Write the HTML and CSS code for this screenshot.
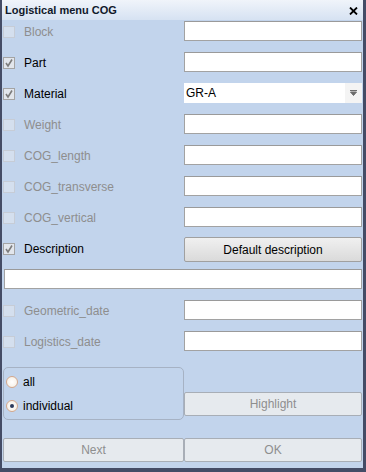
FILE: index.html
```html
<!DOCTYPE html>
<html lang="en">
<head>
    <meta charset="UTF-8">
    <title>Logistical menu COG</title>
    <link rel="stylesheet" href="styles.css">
</head>
<body>
    <div class="window">
        <div class="titlebar">
            <span class="title">Logistical menu COG</span>
            <svg class="close" width="9" height="8" viewBox="0 0 9 8"><path d="M1 0.5 L8 7.5 M8 0.5 L1 7.5" stroke="#000" stroke-width="1.8"/></svg>
        </div>
        <div class="form">
            <div class="check off"><span class="box"></span>Block</div>
            <input type="text" class="field">

            <div class="check on"><span class="box"><svg width="10" height="10" viewBox="0 0 10 10"><path d="M2 5 L4 8 L8 1.5" fill="none" stroke="#7c7c7c" stroke-width="1.6"/></svg></span>Part</div>
            <input type="text" class="field">

            <div class="check on"><span class="box"><svg width="10" height="10" viewBox="0 0 10 10"><path d="M2 5 L4 8 L8 1.5" fill="none" stroke="#7c7c7c" stroke-width="1.6"/></svg></span>Material</div>
            <div class="combo">
                <span>GR-A</span>
                <span class="arrow"><svg width="7" height="6" viewBox="0 0 7 6"><path d="M0 0.5 H7 M0.5 2 H6.5 L3.5 5.5 Z" stroke="#6c6c6c" stroke-width="1" fill="#6c6c6c"/></svg></span>
            </div>

            <div class="check off"><span class="box"></span>Weight</div>
            <input type="text" class="field">

            <div class="check off"><span class="box"></span>COG_length</div>
            <input type="text" class="field">

            <div class="check off"><span class="box"></span>COG_transverse</div>
            <input type="text" class="field">

            <div class="check off"><span class="box"></span>COG_vertical</div>
            <input type="text" class="field">

            <div class="check on"><span class="box"><svg width="10" height="10" viewBox="0 0 10 10"><path d="M2 5 L4 8 L8 1.5" fill="none" stroke="#7c7c7c" stroke-width="1.6"/></svg></span>Description</div>
            <button class="btn default">Default description</button>

            <input type="text" class="field wide">

            <div class="check off"><span class="box"></span>Geometric_date</div>
            <input type="text" class="field">

            <div class="check off"><span class="box"></span>Logistics_date</div>
            <input type="text" class="field">

            <div class="group">
                <div class="radio"><span class="dot"></span>all</div>
                <div class="radio selected"><span class="dot"></span>individual</div>
            </div>
            <button class="btn highlight" disabled>Highlight</button>

            <button class="btn footer" disabled>Next</button>
            <button class="btn footer" disabled>OK</button>
        </div>
    </div>
</body>
</html>
```

FILE: styles.css
```css
body {
    margin: 0;
    font-family: "Liberation Sans", Arial, sans-serif;
    font-size: 12px;
}
.window {
    width: 366px;
    height: 472px;
    box-sizing: border-box;
    background: #c2d4ec;
    border-left: 2px solid #444c66;
    border-right: 3px solid #444c66;
    border-bottom: 4px solid #444c66;
}
.titlebar {
    height: 20px;
    display: flex;
    align-items: center;
    justify-content: space-between;
    padding: 0 5px 0 3px;
    background: linear-gradient(#f0f4fa, #d6e2f2);
}
.title {
    font-weight: 700;
    font-size: 11px;
    color: #10182a;
}
.close {
    margin-top: 1px;
}
/* every row is 20px on a 31px pitch; taller controls overflow their row */
.form {
    display: grid;
    grid-template-columns: 181px 178px;
    grid-auto-rows: 20px;
    row-gap: 11px;
    align-items: start;
    padding: 1px 1px 0 1px;
}
.check {
    display: flex;
    align-items: center;
    gap: 9px;
    height: 20px;
    padding-top: 1px;
    box-sizing: border-box;
}
.check .box {
    width: 10px;
    height: 10px;
    border: 1px solid #a4a4a4;
    background: #e2e6ec;
    display: flex;
    align-items: center;
    justify-content: center;
}
.check.off {
    color: #8e8e8e;
}
.check.off .box {
    border-color: #c6ccd6;
    background: #d4dfee;
}
.check.on {
    color: #000;
}
.field {
    box-sizing: border-box;
    height: 20px;
    margin: 0;
    padding: 0 2px;
    border: 1px solid #a2a2a2;
    border-top-color: #9a9a9a;
    background: #fff;
    font: inherit;
}
.field.wide {
    grid-column: 1 / 3;
    margin-left: 1px;
}
.combo {
    height: 20px;
    display: flex;
    align-items: center;
    justify-content: space-between;
    background: #fff;
    padding-left: 2px;
    color: #000;
}
.arrow {
    width: 17px;
    height: 100%;
    display: flex;
    align-items: center;
    justify-content: center;
    background: #f4f4f4;
}
.btn {
    box-sizing: border-box;
    margin: 0;
    font: inherit;
    border: 1px solid #a8aeb6;
    border-radius: 2px;
    background: #e6eaee;
    color: #8e8e8e;
}
.btn.default {
    height: 25px;
    margin-top: -1px;
    color: #000;
    border-color: #a0a0a0;
    background: linear-gradient(#f0f0f0, #dadada);
}
.group {
    box-sizing: border-box;
    height: 53px;
    margin-top: 5px;
    border: 1px solid #a6b2c4;
    border-radius: 5px;
    padding: 8px 0 0 2px;
    display: flex;
    flex-direction: column;
    gap: 12px;
}
.radio {
    display: flex;
    align-items: center;
    gap: 5px;
    color: #000;
    height: 12px;
}
.radio .dot {
    box-sizing: border-box;
    width: 12px;
    height: 12px;
    border-radius: 50%;
    border: 1px solid #d4a88c;
    background: radial-gradient(#ffffff, #f4ece0);
    display: flex;
    align-items: center;
    justify-content: center;
}
.radio.selected .dot::after {
    content: "";
    width: 4px;
    height: 4px;
    border-radius: 50%;
    background: #2c3a5c;
}
.highlight {
    height: 24px;
    margin-top: 30px;
}
.footer {
    height: 24px;
    margin-top: 45px;
}
```
